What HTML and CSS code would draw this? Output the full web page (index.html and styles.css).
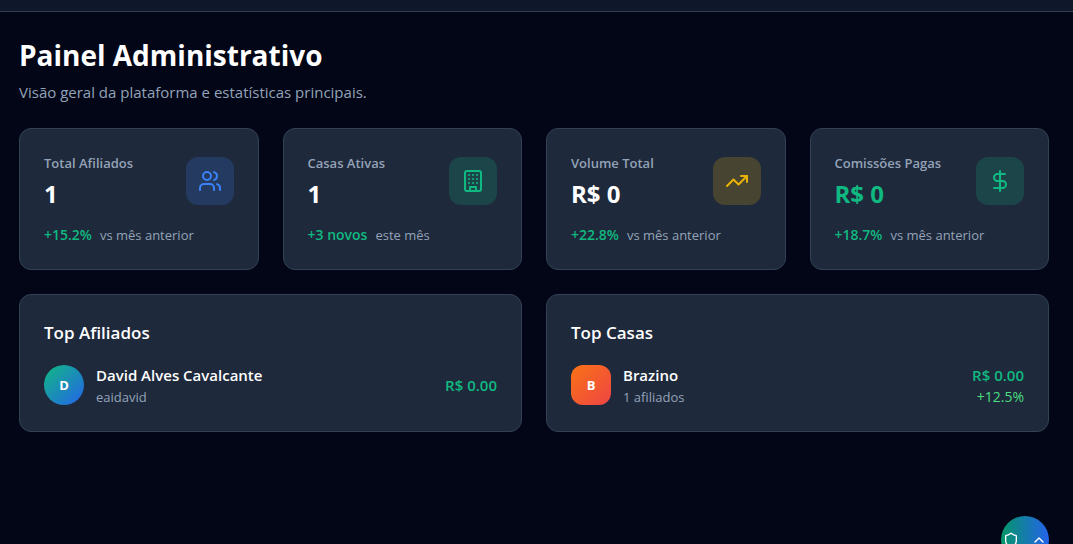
FILE: index.html
```html
<!DOCTYPE html>
<html lang="pt-BR">
<head>
<meta charset="utf-8">
<meta name="viewport" content="width=device-width, initial-scale=1">
<title>Painel Administrativo</title>
<link rel="stylesheet" href="styles.css">
</head>
<body>
<header class="topbar"></header>
<main class="page">
  <div class="heading">
    <h1 class="title">Painel Administrativo</h1>
    <p class="subtitle">Visão geral da plataforma e estatísticas principais.</p>
  </div>

  <section class="stats">
    <article class="card">
      <div class="stat-top">
        <div>
          <p class="stat-label">Total Afiliados</p>
          <p class="stat-value">1</p>
        </div>
        <div class="stat-icon blue">
          <svg class="icon" viewBox="0 0 24 24"><path d="M16 21v-2a4 4 0 0 0-4-4H6a4 4 0 0 0-4 4v2"/><circle cx="9" cy="7" r="4"/><path d="M22 21v-2a4 4 0 0 0-3-3.87"/><path d="M16 3.13a4 4 0 0 1 0 7.75"/></svg>
        </div>
      </div>
      <p class="trend"><span class="trend-value">+15.2%</span><span class="trend-note">vs mês anterior</span></p>
    </article>

    <article class="card">
      <div class="stat-top">
        <div>
          <p class="stat-label">Casas Ativas</p>
          <p class="stat-value">1</p>
        </div>
        <div class="stat-icon green">
          <svg class="icon" viewBox="0 0 24 24"><rect x="4" y="2" width="16" height="20" rx="2"/><path d="M9 22v-4h6v4"/><path d="M8 6h.01M16 6h.01M12 6h.01M12 10h.01M12 14h.01M16 10h.01M16 14h.01M8 10h.01M8 14h.01"/></svg>
        </div>
      </div>
      <p class="trend"><span class="trend-value">+3 novos</span><span class="trend-note">este mês</span></p>
    </article>

    <article class="card">
      <div class="stat-top">
        <div>
          <p class="stat-label">Volume Total</p>
          <p class="stat-value">R$ 0</p>
        </div>
        <div class="stat-icon yellow">
          <svg class="icon" viewBox="0 0 24 24"><path d="M22 7l-8.5 8.5-5-5L2 17"/><path d="M16 7h6v6"/></svg>
        </div>
      </div>
      <p class="trend"><span class="trend-value">+22.8%</span><span class="trend-note">vs mês anterior</span></p>
    </article>

    <article class="card">
      <div class="stat-top">
        <div>
          <p class="stat-label">Comissões Pagas</p>
          <p class="stat-value positive">R$ 0</p>
        </div>
        <div class="stat-icon green">
          <svg class="icon" viewBox="0 0 24 24"><path d="M12 2v20"/><path d="M17 5H9.5a3.5 3.5 0 0 0 0 7h5a3.5 3.5 0 0 1 0 7H6"/></svg>
        </div>
      </div>
      <p class="trend"><span class="trend-value">+18.7%</span><span class="trend-note">vs mês anterior</span></p>
    </article>
  </section>

  <section class="panels">
    <article class="card">
      <h2 class="panel-title">Top Afiliados</h2>
      <div class="entry">
        <div class="avatar person">D</div>
        <div class="entry-text">
          <p class="entry-name">David Alves Cavalcante</p>
          <p class="entry-note">eaidavid</p>
        </div>
        <p class="amount">R$ 0.00</p>
      </div>
    </article>

    <article class="card">
      <h2 class="panel-title">Top Casas</h2>
      <div class="entry">
        <div class="avatar house">B</div>
        <div class="entry-text">
          <p class="entry-name">Brazino</p>
          <p class="entry-note">1 afiliados</p>
        </div>
        <div class="entry-result">
          <p class="amount">R$ 0.00</p>
          <p class="growth">+12.5%</p>
        </div>
      </div>
    </article>
  </section>
</main>

<button class="fab" type="button" aria-label="Menu do administrador">
  <svg class="icon-small" viewBox="0 0 24 24"><path d="M20 13c0 5-3.5 7.5-7.66 8.95a1 1 0 0 1-.67-.01C7.5 20.5 4 18 4 13V6a1 1 0 0 1 1-1c2 0 4.5-1.2 6.24-2.72a1.17 1.17 0 0 1 1.52 0C14.51 3.81 17 5 19 5a1 1 0 0 1 1 1z"/></svg>
  <svg class="icon-small" viewBox="0 0 24 24"><path d="M18 15l-6-6-6 6"/></svg>
</button>
</body>
</html>
```
FILE: styles.css
```css
* {
  box-sizing: border-box;
  margin: 0;
}

body {
  min-height: 100vh;
  background: #020617;
  color: #fff;
  font-family: "Segoe UI", "Open Sans", "Noto Sans", sans-serif;
  font-size: 15px;
  line-height: 24px;
}

.topbar {
  height: 12px;
  background: #0f172a;
  border-bottom: 1px solid #334155;
}

.page {
  display: flex;
  flex-direction: column;
  gap: 24px;
  padding: 24px 24px 24px 19px;
}

.heading {
  display: flex;
  flex-direction: column;
  gap: 6px;
}

.title {
  font-size: 28px;
  line-height: 38px;
  font-weight: 700;
}

.subtitle {
  color: #94a3b8;
}

.stats,
.panels {
  display: grid;
  gap: 24px;
}

.stats {
  grid-template-columns: repeat(4, 1fr);
}

.panels {
  grid-template-columns: repeat(2, 1fr);
}

.card {
  padding: 24px;
  background: #1e293b;
  border: 1px solid #334155;
  border-radius: 12px;
}

.stat-top {
  display: flex;
  align-items: center;
  justify-content: space-between;
}

.stat-label {
  color: #94a3b8;
  font-size: 13px;
  line-height: 20px;
  font-weight: 600;
}

.stat-value {
  margin-top: 6px;
  font-size: 24px;
  line-height: 30px;
  font-weight: 700;
}

.stat-icon {
  display: flex;
  align-items: center;
  justify-content: center;
  width: 48px;
  height: 48px;
  border-radius: 12px;
}

.blue {
  color: #3b82f6;
  background: rgba(59, 130, 246, 0.2);
}

.green {
  color: #10b981;
  background: rgba(16, 185, 129, 0.2);
}

.yellow {
  color: #eab308;
  background: rgba(234, 179, 8, 0.2);
}

.icon,
.icon-small {
  flex: none;
  width: 24px;
  height: 24px;
  fill: none;
  stroke: currentColor;
  stroke-width: 2;
  stroke-linecap: round;
  stroke-linejoin: round;
}

.icon-small {
  width: 16px;
  height: 16px;
}

.trend {
  display: flex;
  gap: 8px;
  margin-top: 16px;
  font-size: 13px;
  line-height: 20px;
}

.trend-value {
  color: #10b981;
  font-size: 14px;
  font-weight: 600;
}

.trend-note {
  color: #94a3b8;
}

.positive,
.amount {
  color: #10b981;
}

.panel-title {
  margin-bottom: 16px;
  font-size: 17px;
  line-height: 28px;
  font-weight: 600;
}

.entry {
  display: flex;
  align-items: center;
  gap: 12px;
}

.avatar {
  display: flex;
  align-items: center;
  justify-content: center;
  width: 40px;
  height: 40px;
  font-size: 13px;
  line-height: 20px;
  font-weight: 700;
}

.person {
  border-radius: 50%;
  background: linear-gradient(to bottom right, #10b981, #2563eb);
}

.house {
  border-radius: 12px;
  background: linear-gradient(to bottom right, #f97316, #ef4444);
}

.entry-text {
  flex: 1;
}

.entry-name,
.amount {
  font-weight: 600;
}

.entry-note,
.growth {
  font-size: 13px;
  line-height: 20px;
}

.entry-note {
  color: #94a3b8;
}

.entry-result {
  text-align: right;
}

.growth {
  color: #4ade80;
  font-size: 14px;
}

.fab {
  position: fixed;
  right: 24px;
  bottom: -20px;
  display: flex;
  align-items: center;
  justify-content: center;
  gap: 12px;
  width: 48px;
  height: 48px;
  padding: 0;
  border: 0;
  border-radius: 50%;
  color: #fff;
  background: linear-gradient(to right, #059669, #2563eb);
}
```
